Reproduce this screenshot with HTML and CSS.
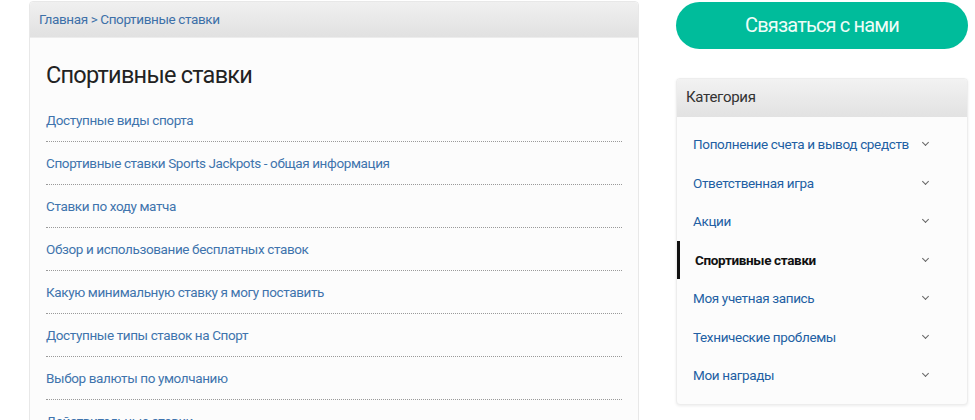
FILE: index.html
```html
<!DOCTYPE html>
<html lang="ru">
<head>
    <meta charset="UTF-8">
    <title>Спортивные ставки</title>
    <link rel="stylesheet" href="styles.css">
</head>
<body>
    <div class="page">
        <div class="main-panel">
            <div class="breadcrumb">
                <a href="#">Главная</a> &gt; <a href="#">Спортивные ставки</a>
            </div>
            <div class="main-body">
                <h1>Спортивные ставки</h1>
                <ul class="article-list">
                    <li><a href="#">Доступные виды спорта</a></li>
                    <li><a href="#">Спортивные ставки Sports Jackpots - общая информация</a></li>
                    <li><a href="#">Ставки по ходу матча</a></li>
                    <li><a href="#">Обзор и использование бесплатных ставок</a></li>
                    <li><a href="#">Какую минимальную ставку я могу поставить</a></li>
                    <li><a href="#">Доступные типы ставок на Спорт</a></li>
                    <li><a href="#">Выбор валюты по умолчанию</a></li>
                    <li><a href="#">Действительные ставки</a></li>
                </ul>
            </div>
        </div>

        <div class="sidebar">
            <a href="#" class="contact-btn">Связаться с нами</a>

            <div class="category-panel">
                <div class="category-header">Категория</div>
                <ul class="category-list">
                    <li><a href="#">Пополнение счета и вывод средств</a><span class="chevron"></span></li>
                    <li><a href="#">Ответственная игра</a><span class="chevron"></span></li>
                    <li><a href="#">Акции</a><span class="chevron"></span></li>
                    <li class="active"><a href="#">Спортивные ставки</a><span class="chevron"></span></li>
                    <li><a href="#">Моя учетная запись</a><span class="chevron"></span></li>
                    <li><a href="#">Технические проблемы</a><span class="chevron"></span></li>
                    <li><a href="#">Мои награды</a><span class="chevron"></span></li>
                </ul>
            </div>
        </div>
    </div>
</body>
</html>
```

FILE: styles.css
```css
* {
    box-sizing: border-box;
    margin: 0;
    padding: 0;
}

body {
    font-family: Roboto, 'Liberation Sans', Arial, sans-serif;
    background: #ffffff;
    color: #333;
    overflow: hidden;
}

a {
    text-decoration: none;
}

ul {
    list-style: none;
}

.page {
    display: flex;
    align-items: flex-start;
    gap: 37px;
    padding-left: 29px;
}

/* Main column */
.main-panel {
    width: 610px;
    margin-top: 1px;
    background: #fcfcfc;
    border: 1px solid #e8e8e8;
    border-radius: 4px 4px 0 0;
}

.breadcrumb {
    height: 36px;
    padding: 0 9px;
    font-size: 13.5px;
    letter-spacing: -0.38px;
    line-height: 34px;
    color: #3d70a8;
    background: linear-gradient(to bottom, #f0f0f0, #e1e1e1);
    border-bottom: 1px solid #ececec;
    border-radius: 4px 4px 0 0;
}

.breadcrumb a {
    color: #3d70a8;
}

.main-body {
    padding: 22px 16px 0 16px;
}

.main-body h1 {
    font-size: 23.5px;
    letter-spacing: -0.75px;
    font-weight: 400;
    line-height: 30px;
    color: #222;
    margin-bottom: 9px;
}

.article-list li {
    padding: 11px 0;
    line-height: 20px;
    font-size: 13.5px;
    letter-spacing: -0.38px;
    border-bottom: 1px dotted #9a9a9a;
}

.article-list a {
    color: #3f74ad;
}

/* Sidebar */
.sidebar {
    width: 292px;
}

.contact-btn {
    display: block;
    margin-top: 2px;
    height: 47px;
    line-height: 47px;
    border-radius: 24px;
    background: #00bc9b;
    color: #eefdf8;
    font-size: 20px;
    letter-spacing: -0.85px;
    text-align: center;
}

.category-panel {
    margin-top: 29px;
    background: #fcfcfc;
    border: 1px solid #ededed;
    border-radius: 4px;
    box-shadow: 0 1px 3px rgba(0, 0, 0, 0.08);
    overflow: hidden;
}

.category-header {
    height: 38px;
    padding: 0 9px;
    line-height: 37px;
    font-size: 15px;
    letter-spacing: -0.3px;
    color: #333;
    background: linear-gradient(to bottom, #f2f2f2, #e2e2e2);
}

.category-list {
    padding: 8px 0 9px;
}

.category-list li {
    display: flex;
    justify-content: space-between;
    align-items: center;
    padding: 9px 39px 9px 16px;
    line-height: 20.5px;
    font-size: 13.5px;
    letter-spacing: -0.35px;
}

.category-list a {
    color: #225fa3;
}

.category-list li.active {
    border-left: 3px solid #111;
    padding-left: 15px;
}

.category-list li.active a {
    color: #111;
    font-weight: 700;
}

.chevron {
    flex-shrink: 0;
    width: 5px;
    height: 5px;
    border-right: 1.5px solid #666;
    border-bottom: 1.5px solid #666;
    transform: rotate(45deg);
    margin-top: -3px;
}
```
